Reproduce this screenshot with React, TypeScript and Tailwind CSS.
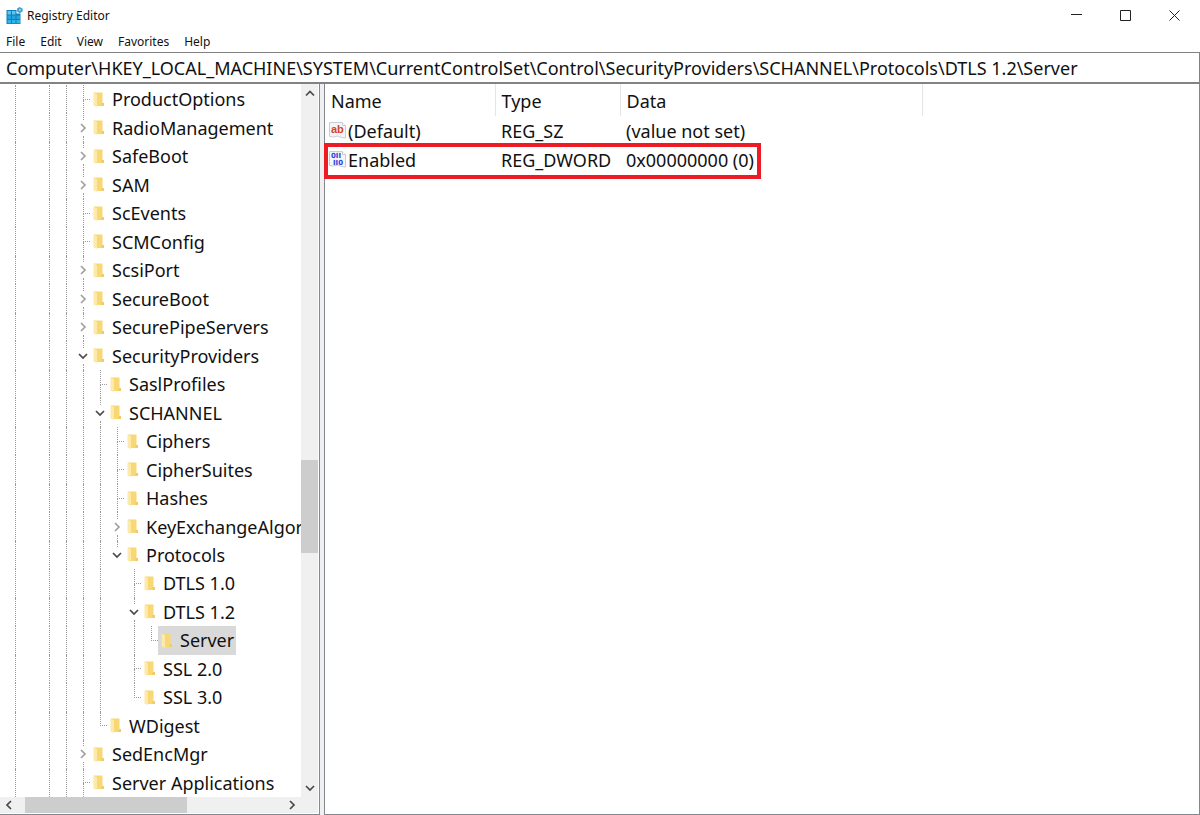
import { useState } from 'react';

interface RegKey {
  name: string;
  open?: boolean;
  closed?: boolean;
  children?: RegKey[];
}

interface Row {
  node: RegKey;
  guides: boolean[];
  last: boolean;
}

const KEYS: RegKey[] = [
  { name: 'ProductOptions' },
  { name: 'RadioManagement', closed: true },
  { name: 'SafeBoot', closed: true },
  { name: 'SAM', closed: true },
  { name: 'ScEvents' },
  { name: 'SCMConfig' },
  { name: 'ScsiPort', closed: true },
  { name: 'SecureBoot', closed: true },
  { name: 'SecurePipeServers', closed: true },
  {
    name: 'SecurityProviders',
    open: true,
    children: [
      { name: 'SaslProfiles' },
      {
        name: 'SCHANNEL',
        open: true,
        children: [
          { name: 'Ciphers' },
          { name: 'CipherSuites' },
          { name: 'Hashes' },
          { name: 'KeyExchangeAlgorithms', closed: true },
          {
            name: 'Protocols',
            open: true,
            children: [
              { name: 'DTLS 1.0' },
              { name: 'DTLS 1.2', open: true, children: [{ name: 'Server' }] },
              { name: 'SSL 2.0' },
              { name: 'SSL 3.0' },
            ],
          },
        ],
      },
      { name: 'WDigest' },
    ],
  },
  { name: 'SedEncMgr', closed: true },
  { name: 'Server Applications' },
];

// Ancestors above the visible part: true where the guide line carries on.
const ROOT_GUIDES = [true, false, true, true];

function flatten(nodes: RegKey[], guides: boolean[], root = false): Row[] {
  return nodes.flatMap((node, i) => {
    const last = !root && i === nodes.length - 1;
    const row = { node, guides, last };
    return [row, ...flatten(node.children ?? [], [...guides, !last])];
  });
}

const ROWS = flatten(KEYS, ROOT_GUIDES, true);

const VALUES = [
  { name: '(Default)', type: 'REG_SZ', data: '(value not set)', binary: false },
  { name: 'Enabled', type: 'REG_DWORD', data: '0x00000000 (0)', binary: true },
];

const PATH =
  'Computer\\HKEY_LOCAL_MACHINE\\SYSTEM\\CurrentControlSet\\Control\\SecurityProviders\\SCHANNEL\\Protocols\\DTLS 1.2\\Server';

function Expander({ node, last }: { node: RegKey; last: boolean }) {
  const hasToggle = node.open || node.closed;

  if (!hasToggle) {
    return (
      <span className="flex w-[17px] shrink-0 flex-col self-stretch pl-[10px]">
        <span className="flex-1 border-b border-l border-dotted border-[#9a9a9a]" />
        <span className={last ? 'flex-1' : 'flex-1 border-l border-dotted border-[#9a9a9a]'} />
      </span>
    );
  }

  return (
    <span className="flex w-[17px] shrink-0 flex-col self-stretch">
      <span className="ml-[10px] flex-1 border-l border-dotted border-[#9a9a9a]" />
      <button type="button" aria-label={node.open ? `Collapse ${node.name}` : `Expand ${node.name}`} className="ml-1 h-4 w-3">
        <Chevron dir={node.open ? 'down' : 'right'} light={!node.open} />
      </button>
      <span className={last ? 'ml-[10px] flex-1' : 'ml-[10px] flex-1 border-l border-dotted border-[#9a9a9a]'} />
    </span>
  );
}

function TreeRow({ row, selected, onSelect }: { row: Row; selected: boolean; onSelect: () => void }) {
  const { node, guides, last } = row;
  return (
    <li
      role="treeitem"
      aria-level={guides.length + 1}
      aria-selected={selected}
      aria-expanded={node.open ? true : node.closed ? false : undefined}
      className="flex min-h-7 flex-1 items-center overflow-hidden pl-[5px]"
    >
      {guides.map((on, i) => (
        <span key={i} className="w-[17px] shrink-0 self-stretch pl-[10px]">
          {on && <span className="block h-full border-l border-dotted border-[#9a9a9a]" />}
        </span>
      ))}
      <Expander node={node} last={last} />
      <button
        type="button"
        onClick={onSelect}
        className={`flex items-center gap-2 self-stretch pr-0.5 pl-[3px] whitespace-nowrap ${selected ? 'bg-[#d9d9d9]' : ''}`}
      >
        <FolderIcon />
        {node.name}
      </button>
    </li>
  );
}

function KeyTree() {
  const [selected, setSelected] = useState('Server');

  return (
    <nav aria-label="Registry keys" className="flex w-80 shrink-0 flex-col border-r border-b border-[#828790] pr-px pb-px">
      <div className="flex flex-1">
        <ul role="tree" className="flex min-w-0 flex-1 flex-col overflow-hidden pt-px text-[18px] leading-6">
          {ROWS.map((row) => (
            <TreeRow
              key={row.node.name}
              row={row}
              selected={row.node.name === selected}
              onSelect={() => setSelected(row.node.name)}
            />
          ))}
        </ul>
        <div className="flex w-[17px] flex-col bg-[#f0f0f0]">
          <button type="button" aria-label="Scroll up" className="flex h-[18px] items-center justify-center">
            <Chevron dir="up" />
          </button>
          <div className="flex-[358]" />
          <div className="flex-[93] bg-[#cdcdcd]" />
          <div className="flex-[226]" />
          <button type="button" aria-label="Scroll down" className="flex h-[18px] items-center justify-center">
            <Chevron dir="down" />
          </button>
        </div>
      </div>
      <div className="flex h-4 bg-[#f0f0f0] pr-[17px]">
        <button type="button" aria-label="Scroll left" className="flex w-[18px] items-center justify-center">
          <Chevron dir="left" />
        </button>
        <div className="flex-[7]" />
        <div className="flex-[161] bg-[#cdcdcd]" />
        <div className="flex-[96]" />
        <button type="button" aria-label="Scroll right" className="flex w-[18px] items-center justify-center">
          <Chevron dir="right" />
        </button>
      </div>
    </nav>
  );
}

function ValueList() {
  return (
    <main className="relative min-w-0 flex-1 border border-t-0 border-[#828790] text-[18px] leading-6">
      <table className="table-fixed border-collapse text-left">
        <colgroup>
          <col className="w-[170px]" />
          <col className="w-[125px]" />
          <col className="w-[302px]" />
        </colgroup>
        <thead>
          <tr className="h-8">
            {['Name', 'Type', 'Data'].map((title) => (
              <th key={title} scope="col" className="border-r border-[#e5e5e5] pt-0.5 pl-1.5 font-normal">
                {title}
              </th>
            ))}
          </tr>
        </thead>
        <tbody>
          {VALUES.map((value) => (
            <tr key={value.name} className="h-[29px]">
              <td className="pl-1">
                <span className="flex items-center gap-0.5">
                  <ValueIcon binary={value.binary} />
                  {value.name}
                </span>
              </td>
              <td className="pl-1.5 whitespace-nowrap">{value.type}</td>
              <td className="pl-1.5 whitespace-nowrap">{value.data}</td>
            </tr>
          ))}
        </tbody>
      </table>
      <div className="pointer-events-none absolute top-[59px] -left-px h-9 w-[437px] border-4 border-[#ed1c24]" />
    </main>
  );
}

export default function App() {
  return (
    <div className="flex min-h-screen flex-col bg-white font-['Noto_Sans','Open_Sans',sans-serif] text-[#111]">
      <header className="flex h-8 items-center pr-px pl-1.5">
        <RegeditIcon />
        <h1 className="flex-1 pl-1 text-[12px] leading-4">Registry Editor</h1>
        <div className="flex self-stretch pb-0.5">
          <button type="button" aria-label="Minimize" className="flex w-[49px] items-center justify-center">
            <svg width="11" height="11" viewBox="0 0 11 11" fill="none" stroke="#222">
              <path d="M0 4.5h11" />
            </svg>
          </button>
          <button type="button" aria-label="Maximize" className="flex w-[49px] items-center justify-center">
            <svg width="11" height="11" viewBox="0 0 11 11" fill="none" stroke="#222">
              <path d="M.5.5h10v10H.5z" />
            </svg>
          </button>
          <button type="button" aria-label="Close" className="flex w-[49px] items-center justify-center">
            <svg width="11" height="11" viewBox="0 0 11 11" fill="none" stroke="#222">
              <path d="M.5.5l10 10M10.5.5l-10 10" />
            </svg>
          </button>
        </div>
      </header>

      <div className="flex h-5 items-center gap-[15px] pl-1.5 text-[12px] leading-4">
        {['File', 'Edit', 'View', 'Favorites', 'Help'].map((item) => (
          <button key={item} type="button">
            {item}
          </button>
        ))}
      </div>

      <input
        aria-label="Address"
        defaultValue={PATH}
        className="h-8 w-full border border-b-2 border-l-0 border-[#828282] px-1.5 text-[18px] outline-none"
      />

      <div className="flex flex-1 gap-1 bg-[#f0f0f0] *:bg-white">
        <KeyTree />
        <ValueList />
      </div>
    </div>
  );
}

function Chevron({ dir, light }: { dir: 'up' | 'down' | 'left' | 'right'; light?: boolean }) {
  const paths = {
    up: 'M2 8.5 6 4.5l4 4',
    down: 'M2 4l4 4 4-4',
    left: 'M8 2 4 6l4 4',
    right: 'M4 2l4 4-4 4',
  };
  return (
    <svg width="12" height="12" viewBox="0 0 12 12" fill="none" stroke={light ? '#a0a0a0' : '#484848'} strokeWidth="1.7" aria-hidden="true">
      <path d={paths[dir]} />
    </svg>
  );
}

function FolderIcon() {
  return (
    <svg width="11" height="15" viewBox="0 0 11 15" aria-hidden="true">
      <path d="M1 .5h8.500v10.500h1.500v3H1z" fill="#f8d775" />
      <path d="M8.500 11H11v3H8.500z" fill="#f0cb68" />
      <path d="M.5.5l3.500 1.500V15L.5 13.500z" fill="#fde9a9" />
    </svg>
  );
}

function RegeditIcon() {
  return (
    <svg width="17" height="18" viewBox="0 0 17 18" aria-hidden="true">
      <path d="M.5 3h10v3.500h4V17H.5z" fill="#0f7fb8" />
      <path d="M1.500 4h3.500v3.500H1.500zM6 4h3.500v3.500H6z" fill="#5cc4ee" />
      <path d="M1.500 8.500h3.500V12H1.500zM6 8.500h3.500V12H6zM10.500 8.500h3.500V12h-3.500z" fill="#22a5e0" />
      <path d="M1.500 13h3.500v3.200H1.500zM6 13h3.500v3.200H6zM10.500 13h3.500v3.200h-3.500z" fill="#35b4ea" />
      <path d="M13.500 0l3 1.500.3 2.500-2.800 2.300L11 4.500l.2-3z" fill="#3a9fd0" />
      <path d="M13.800 1.500l1.500 1-1.200 2-1.600-1z" fill="#8fd8f5" />
    </svg>
  );
}

function ValueIcon({ binary }: { binary: boolean }) {
  return (
    <svg width="17" height="17" viewBox="0 0 17 17" className="shrink-0" aria-hidden="true">
      <path d="M.5.5h13l3 3v12.500l-4-.5-4-1.500-4 1-4-.5z" fill="#f4f5f7" stroke="#c8cbd0" />
      <path d="M13.500.5v3h3" fill="#fff" stroke="#c8cbd0" />
      {binary ? (
        <g fill="#2743d8" fontFamily="DejaVu Sans, sans-serif" fontWeight="700" fontSize="7">
          <text x="2" y="7">0II</text>
          <text x="4" y="14">II0</text>
        </g>
      ) : (
        <text x="2" y="11" fill="#d8432a" fontFamily="Liberation Sans, sans-serif" fontWeight="700" fontSize="11">
          ab
        </text>
      )}
    </svg>
  );
}
